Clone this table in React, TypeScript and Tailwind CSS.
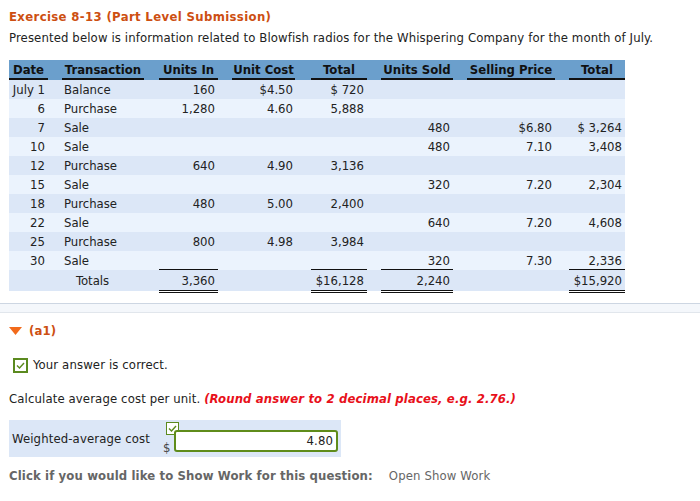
import React from "react";

type Row = {
  date: string;
  tx: string;
  unitsIn?: string;
  unitCost?: string;
  totalIn?: string;
  unitsSold?: string;
  price?: string;
  totalOut?: string;
};

const rows: Row[] = [
  { date: "July 1", tx: "Balance", unitsIn: "160", unitCost: "$4.50", totalIn: "$ 720" },
  { date: "6", tx: "Purchase", unitsIn: "1,280", unitCost: "4.60", totalIn: "5,888" },
  { date: "7", tx: "Sale", unitsSold: "480", price: "$6.80", totalOut: "$ 3,264" },
  { date: "10", tx: "Sale", unitsSold: "480", price: "7.10", totalOut: "3,408" },
  { date: "12", tx: "Purchase", unitsIn: "640", unitCost: "4.90", totalIn: "3,136" },
  { date: "15", tx: "Sale", unitsSold: "320", price: "7.20", totalOut: "2,304" },
  { date: "18", tx: "Purchase", unitsIn: "480", unitCost: "5.00", totalIn: "2,400" },
  { date: "22", tx: "Sale", unitsSold: "640", price: "7.20", totalOut: "4,608" },
  { date: "25", tx: "Purchase", unitsIn: "800", unitCost: "4.98", totalIn: "3,984" },
  { date: "30", tx: "Sale", unitsSold: "320", price: "7.30", totalOut: "2,336" },
];

const headers = ["Date", "Transaction", "Units In", "Unit Cost", "Total", "Units Sold", "Selling Price", "Total"];

// column grid: cell widths include the gap after each underline
const grid = "grid grid-cols-[53px_97px_73px_79px_70px_86px_102px_56px]";
const gapR = ["pr-[14px]", "pr-[15px]", "pr-[14px]", "pr-[16px]", "pr-[14px]", "pr-[14px]", "pr-[14px]", ""];

const Check = ({ size }: { size: "lg" | "sm" }) => (
  <span
    className={
      size === "lg"
        ? "flex h-[15px] w-[15px] items-center justify-center border-2 border-[#5b8a1f] bg-white"
        : "flex h-[13px] w-[13px] items-center justify-center border border-[#5b8a1f] bg-white"
    }
  >
    <svg width="9" height="7" viewBox="0 0 9 7">
      <path d="M1 3.5 L3.5 6 L8 1" fill="none" stroke="#5b8a1f" strokeWidth="1.4" />
    </svg>
  </span>
);

const Totals = ({ v, pad }: { v: string; pad: string }) => (
  <div className={pad}>
    <div className="h-[23px] pt-[1px] leading-[19px] text-right pr-[3px] border-b-[3px] border-double border-[#111]">{v}</div>
  </div>
);

export default function App() {
  return (
    <div className="w-[700px] h-[501px] bg-white text-[13px] tracking-[0.12px] text-[#222] font-['DejaVu_Sans_Condensed','DejaVu_Sans',sans-serif] overflow-hidden">
      <div className="px-[9px] pt-[9px]">
        <h1 className="font-bold tracking-[0.35px] text-[#cd4f12] leading-4">Exercise 8-13 (Part Level Submission)</h1>
        <p className="mt-[5px] leading-4">
          Presented below is information related to Blowfish radios for the Whispering Company for the month of July.
        </p>

        <div className="mt-[14px] w-[616px] tracking-normal">
          {/* header */}
          <div className={`${grid} h-[20px] bg-[#6b9fcc] font-bold text-[#111]`}>
            {headers.map((h, i) => (
              <div key={i} className={gapR[i]}>
                <div className="border-b-2 border-[#111] h-[20px] text-center leading-[19px]">{h}</div>
              </div>
            ))}
          </div>

          {rows.map((r, idx) => {
            const last = idx === rows.length - 1;
            const ln = last ? "border-b border-[#111]" : "";
            return (
              <div
                key={idx}
                className={`${grid} h-[19px] leading-[19px] ${idx % 2 === 0 ? "bg-[#dce7f7]" : "bg-[#ebf3fd]"}`}
              >
                <div className={gapR[0]}>
                  <div className="text-right pr-[3px]">{r.date}</div>
                </div>
                <div className={gapR[1]}>
                  <div className="pl-[2px]">{r.tx}</div>
                </div>
                <div className={gapR[2]}>
                  <div className={`h-[19px] text-right pr-[3px] ${ln}`}>{r.unitsIn}</div>
                </div>
                <div className={gapR[3]}>
                  <div className="text-right pr-[2px]">{r.unitCost}</div>
                </div>
                <div className={gapR[4]}>
                  <div className={`h-[19px] text-right pr-[3px] ${ln}`}>{r.totalIn}</div>
                </div>
                <div className={gapR[5]}>
                  <div className={`h-[19px] text-right pr-[3px] ${ln}`}>{r.unitsSold}</div>
                </div>
                <div className={gapR[6]}>
                  <div className="text-right pr-[3px]">{r.price}</div>
                </div>
                <div className={gapR[7]}>
                  <div className={`h-[19px] text-right pr-[3px] ${ln}`}>{r.totalOut}</div>
                </div>
              </div>
            );
          })}

          {/* totals */}
          <div className={`${grid} h-[21px] bg-[#dce7f7]`}>
            <div />
            <div className="pl-[14px] leading-[22px]">Totals</div>
            <Totals v="3,360" pad={gapR[2]} />
            <div />
            <Totals v="$16,128" pad={gapR[4]} />
            <Totals v="2,240" pad={gapR[5]} />
            <div />
            <Totals v="$15,920" pad="" />
          </div>
        </div>
      </div>

      {/* separator band */}
      <div className="mt-[12px] h-[10px] border-t border-b border-t-[#cdd6e2] border-b-[#e1e6ec] bg-[#f4f7fb]" />

      <div className="px-[9px]">
        <div className="mt-[10px] flex items-center gap-[7px] h-4">
          <svg width="13" height="8" viewBox="0 0 13 8">
            <polygon points="0,0 13,0 6.5,8" fill="#f26a1b" />
          </svg>
          <span className="font-bold text-[#cd4f12]">(a1)</span>
        </div>

        <div className="mt-[18px] ml-[4px] flex items-center gap-[5px] h-4">
          <Check size="lg" />
          <span>Your answer is correct.</span>
        </div>

        <p className="mt-[18px] leading-4">
          Calculate average cost per unit.{" "}
          <span className="font-bold italic text-[#e8101a]">(Round answer to 2 decimal places, e.g. 2.76.)</span>
        </p>

        <div className="mt-[13px] w-[332px] h-[37px] bg-[#dce7f7] flex items-center pl-[3px]">
          <span className="w-[154px]">Weighted-average cost</span>
          <div className="relative w-[172px] h-[37px]">
            <div className="absolute left-0 top-[2px]">
              <Check size="sm" />
            </div>
            <span className="absolute -left-[3px] top-[20px] leading-4 text-[#444]">$</span>
            <div className="absolute left-[8px] top-[10px] w-[164px] h-[22px] rounded-[3px] border-2 border-[#5f8c1b] bg-white text-right pr-[3px] leading-[18px]">
              4.80
            </div>
          </div>
        </div>

        <div className="mt-[11px] flex items-center h-4 text-[#666]">
          <span className="font-bold">Click if you would like to Show Work for this question:</span>
          <span className="ml-[16px]">Open Show Work</span>
        </div>
      </div>
    </div>
  );
}
